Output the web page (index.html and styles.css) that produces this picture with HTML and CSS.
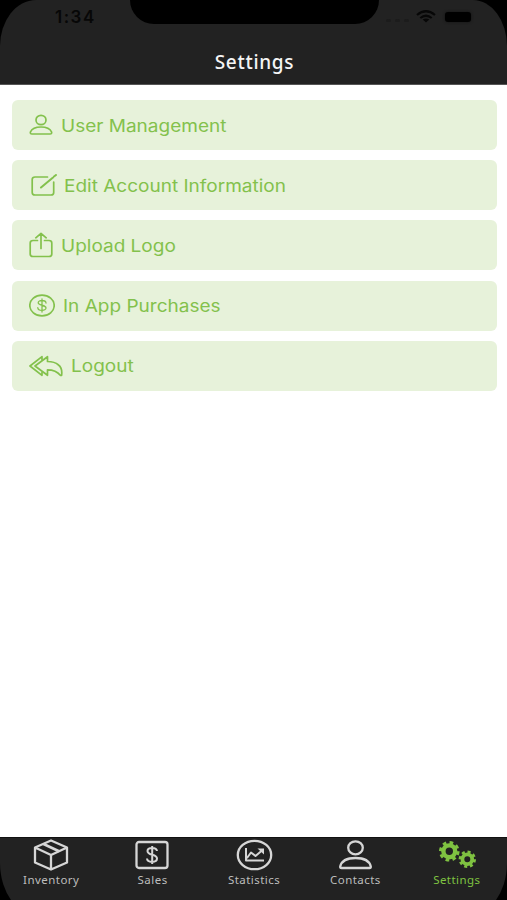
FILE: index.html
```html
<!DOCTYPE html>
<html lang="en">
<head>
<meta charset="utf-8">
<title>Settings</title>
<link rel="stylesheet" href="styles.css">
</head>
<body>
<div class="phone">
  <header class="top">
    <div class="top-inner">
      <div class="status">
        <span class="time">1:34</span>
        <div class="notch"></div>
        <div class="status-icons">
          <span class="dots"><i></i><i></i><i></i></span>
          <svg width="20" height="13" viewBox="0 0 20 13" fill="none" stroke="#070707" stroke-width="2.2"><path d="M1 5Q10-2.5 19 5M4.3 8Q10 3.5 15.700 8"/><path d="M6.700 9.500Q10 7.500 13.300 9.500L10 12.500Z" fill="#070707" stroke="none"/></svg>
          <span class="battery"></span>
        </div>
      </div>
      <h1 class="title">Settings</h1>
    </div>
  </header>
  <main class="list">
    <a class="row"><svg width="24" height="22" viewBox="0 0 24 22"><ellipse cx="12" cy="6" rx="5" ry="4.700"/><path d="M3 20H21Q23 20 22.600 18C21 14.500 17 13 12 13S3 14.500 1.400 18Q1 20 3 20Z"/></svg><span class="label user">User Management</span></a>
    <a class="row edit-row"><svg width="26" height="23" viewBox="0 0 26 23"><path d="M16.500 3H4Q1.200 3 1.200 5.500V18.500Q1.200 21 4 21H20Q22.700 21 22.700 18.500V8"/><path d="M10 13.500L22 3.500M23 2.500L25 1" stroke-width="2"/></svg><span class="label edit">Edit Account Information</span></a>
    <a class="row"><svg width="24" height="26" viewBox="0 0 24 26"><path d="M8.500 8.500H4Q1.200 8.500 1.200 11V22Q1.200 24.500 4 24.500H20Q22.800 24.500 22.800 22V11Q22.800 8.500 20 8.500H15.500M12 16.500V1.500M6.800 5.800L12 1.300L17.200 5.800"/></svg><span class="label upload">Upload Logo</span></a>
    <a class="row"><svg width="26" height="23" viewBox="0 0 26 23"><ellipse cx="13" cy="11.500" rx="12.200" ry="10.400"/><path d="M17 9C16.800 5.800 9.200 5.600 9.200 8.700C9.200 12 17 10.500 17 14C17 17.200 9 17.200 8.800 13.700M13 5V18" stroke-width="1.300"/></svg><span class="label purchase">In App Purchases</span></a>
    <a class="row"><svg width="34" height="22" viewBox="0 0 34 22"><path d="M13 4.500V1.700L1 11L13 20.300V17.500"/><path d="M18.500 6.500V1.700L6 11L18.500 20.300V14.800C24 14.800 28 16 31.300 20.300H32.600C33.300 15.500 32 12 29.500 10C27 7.800 23.500 6.500 18.500 6.500Z"/></svg><span class="label logout">Logout</span></a>
  </main>
  <nav class="tabs">
    <div class="tabs-inner">
      <a class="tab"><svg width="36" height="32" viewBox="0 0 36 32"><path d="M18 1.500L34 8.500V23.500L18 30.500L2 23.500V8.500ZM2 8.500L18 16L34 8.500M18 16V30.500"/><path d="M10.500 5L26 12.300" stroke-width="2.600"/></svg><span>Inventory</span></a>
      <a class="tab"><svg width="36" height="32" viewBox="0 0 36 32"><rect x="2.500" y="3" width="31" height="26" rx="2.500"/><path d="M23 12C22.500 8 13.500 8 13.500 12C13.500 17 23 14.500 23 19.500C23 24 13.300 24 13 19.500M18.200 7V25" stroke-width="2"/></svg><span>Sales</span></a>
      <a class="tab"><svg width="38" height="32" viewBox="0 0 38 32"><ellipse cx="19.500" cy="16" rx="16.700" ry="14.200"/><path d="M11 9V21.500H29M12 19L16 13.500L20.500 17L27 11.500" stroke-width="2"/><path d="M22.500 9.500H29V15.500Z" fill="#d6d6d6" stroke="none"/></svg><span>Statistics</span></a>
      <a class="tab"><svg width="36" height="32" viewBox="0 0 36 32"><ellipse cx="18.500" cy="8.800" rx="7.300" ry="6.500"/><path d="M4.500 29H32.500Q34 29 33.800 27.500C32.500 22 26.500 19 18.500 19S4.500 22 3.200 27.500Q3 29 4.500 29Z"/></svg><span>Contacts</span></a>
      <a class="tab active"><svg class="gears" width="40" height="32" viewBox="0 0 40 32"><circle cx="13.300" cy="12.300" r="5.900" stroke-width="4.400"/><circle cx="13.300" cy="12.300" r="8.800" stroke-width="3" stroke-dasharray="3.600 3.312"/><circle cx="31.300" cy="20.300" r="4.900" stroke-width="3.800"/><circle cx="31.300" cy="20.300" r="7.300" stroke-width="2.800" stroke-dasharray="3 2.733"/></svg><span>Settings</span></a>
    </div>
  </nav>
</div>
</body>
</html>
```
FILE: styles.css
```css
* { box-sizing: border-box; }
body { margin: 0; background: #fff; }
.phone { width: 507px; height: 900px; display: flex; flex-direction: column; overflow: hidden; }
.top { height: 85px; background: #000; flex: none; }
.top-inner { height: 85px; background: #222; border-radius: 36px 34px 0 0 / 46px 46px 0 0; border-bottom: 1px solid #555; }
.status { display: flex; height: 42px; align-items: flex-start; }
.time { width: 130px; padding: 6px 0 0 55px; font: 600 17px/22px Inter, sans-serif; letter-spacing: 1.500px; color: #070707; }
.notch { width: 249px; height: 24px; background: #000; border-radius: 0 0 24px 24px; }
.status-icons { display: flex; padding: 10px 0 0 7px; }
.dots { display: flex; gap: 4px; width: 30px; padding-top: 9px; }
.dots i { width: 5px; height: 3px; border-radius: 2px; background: #1c1c1c; }
.battery { width: 26px; height: 10px; margin: 2px 0 0 9px; border-radius: 3px; background: #000; box-shadow: 0 0 3px #111; }
.title { margin: 5px 0 0; text-align: center; font: 500 19px/30px "Noto Sans", sans-serif; letter-spacing: 0.700px; color: #f5f5f5; padding-left: 2px; }
.list { flex: 1; padding: 15px 10.500px 0 12px; display: flex; flex-direction: column; gap: 10.200px; }
.row { height: 50px; flex: none; display: flex; align-items: center; gap: 8px; padding-left: 16.500px; background: #e7f2da; border-radius: 6px; color: #83c14c; }
.edit-row { padding-left: 18.500px; gap: 7px; }
.row svg { fill: none; stroke: #83c14c; stroke-width: 1.700; stroke-linejoin: round; stroke-linecap: round; flex: none; }
.label { font: 400 17px/24px Inter, sans-serif; padding-top: 1px; white-space: nowrap; transform-origin: left center; transform: scaleX(1.118); }
.tabs { height: 63px; flex: none; overflow: hidden; background: #000; }
.tabs-inner { height: 82px; display: flex; background: #222; border-radius: 0 0 44px 44px / 0 0 56px 56px; border-top: 1px solid #111; }
.tab { flex: 1; display: flex; flex-direction: column; align-items: center; padding-top: 1px; color: #bdbdbd; font: 400 11.500px/16px "Noto Sans", sans-serif; letter-spacing: 0.450px; }
.tab svg { fill: none; stroke: #d6d6d6; stroke-width: 2.300; stroke-linejoin: round; flex: none; }
.tab span { margin-top: 1px; padding-left: 1px; }
.tab.active { color: #7fc241; }
.tab .gears { stroke: #7fc241; }
```
